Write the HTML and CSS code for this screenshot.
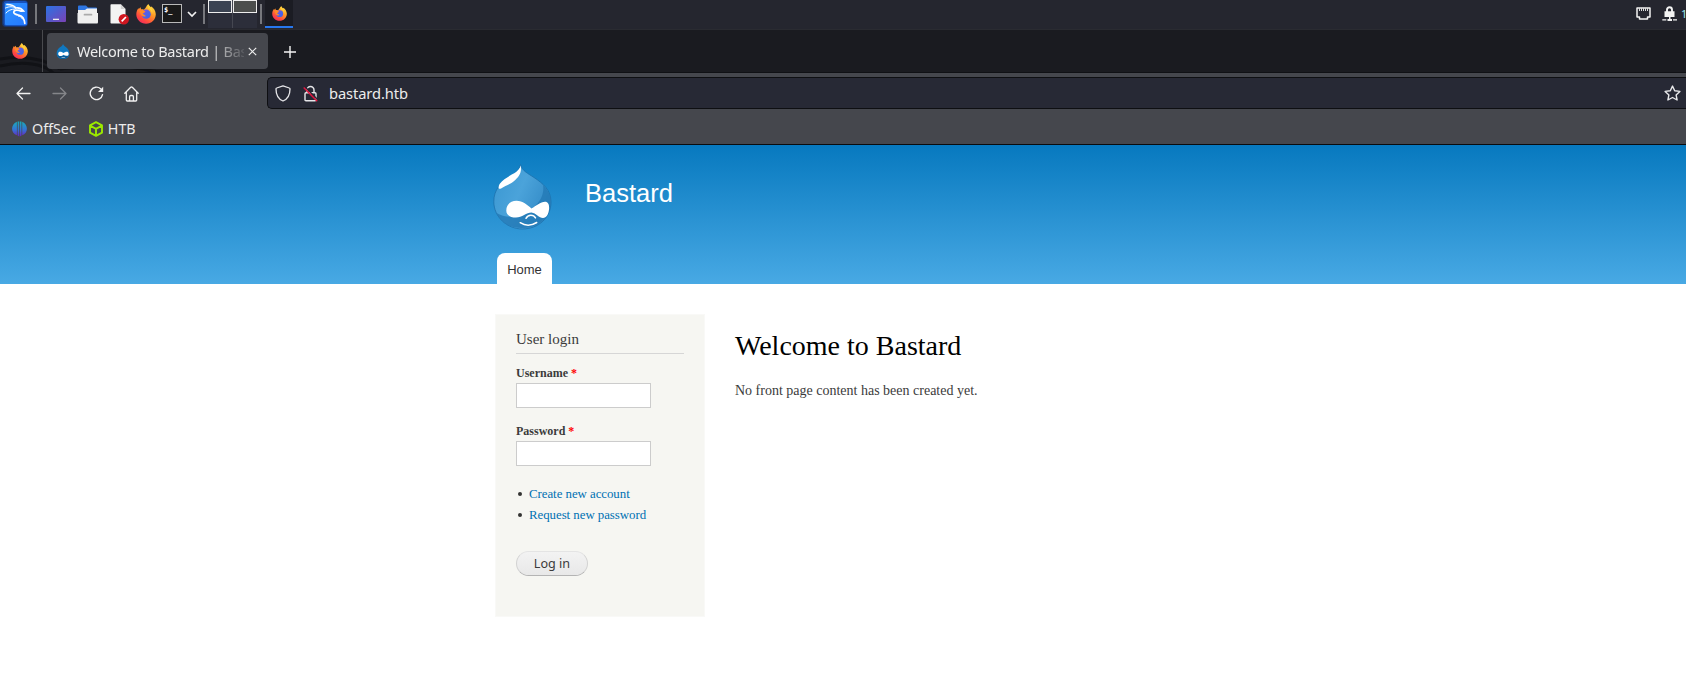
FILE: index.html
```html
<!DOCTYPE html>
<html lang="en">
<head>
<meta charset="utf-8">
<title>Welcome to Bastard | Bastard</title>
<link rel="stylesheet" href="styles.css">
</head>
<body>
<svg class="defs" width="0" height="0" aria-hidden="true">
  <defs>
    <linearGradient id="flame" x1=".85" y1="0" x2=".2" y2="1"><stop offset="0" stop-color="#ffe84a"/><stop offset=".4" stop-color="#ff9a25"/><stop offset=".75" stop-color="#ff4b3e"/><stop offset="1" stop-color="#ef2661"/></linearGradient>
    <linearGradient id="globe" x1="0" y1="0" x2="1" y2="1"><stop offset="0" stop-color="#8b45e8"/><stop offset=".5" stop-color="#4f62e6"/><stop offset="1" stop-color="#3d62e8"/></linearGradient>
    <linearGradient id="screen" x1="0" y1="0" x2="1" y2="1"><stop offset="0" stop-color="#2b73e4"/><stop offset="1" stop-color="#7a42b5"/></linearGradient>
    <linearGradient id="kali" x1="0" y1="0" x2="1" y2="1"><stop offset="0" stop-color="#2e93ff"/><stop offset="1" stop-color="#2478ff"/></linearGradient>
    <linearGradient id="offsec" gradientUnits="userSpaceOnUse" x1="0" y1="0" x2="0" y2="16"><stop offset="0" stop-color="#16b0b6"/><stop offset=".55" stop-color="#3572d6"/><stop offset="1" stop-color="#6c1fc0"/></linearGradient>
    <linearGradient id="drop" x1="0" y1=".2" x2="1" y2=".7"><stop offset="0" stop-color="#3b98d2"/><stop offset=".45" stop-color="#4ba3da"/><stop offset="1" stop-color="#2f87c4"/></linearGradient>
    <symbol id="firefox" viewBox="0 0 20 20">
      <path fill="url(#flame)" d="M12.5 0c.2 1.4 1 2.3 2.2 3.3l.2-1c2.9 1.700 4.700 4.600 4.900 8-.1 5.400-4.300 9.500-9.700 9.500S.3 15.600.3 10.300c0-2.700 1-4.900 2.200-6.400l.2 1.300c.6-.9 1.300-1.500 2.100-1.900-.1.700 0 1.400.3 2 1-.1 2-.1 2.800.4 1-.9 1.400-1.600 2-2.500.6-1 1.300-2.300 2.600-3.200z"/>
      <circle cx="10.200" cy="10.200" r="4.600" fill="url(#globe)"/>
      <path fill="#ff8a27" d="M3.500 7.200c2.200-1.300 4.300-1.200 5.900.2-.6 1.400-1.900 1.400-2.800 2.500 1 .3 2.200 1.200 3.400 2.100-2 1.300-4.600.4-5.400-1.900z"/>
      <path fill="#ffd23c" d="M12 4.600c1.800.5 4.100 2.500 4 5.600 1.200-2.300.3-5.300-1.400-6.600L12.500.500c-.8 1.700-.8 3-.5 4.100z"/>
    </symbol>
  </defs>
</svg>

<header class="panel">
  <svg class="kali" width="28" height="28" viewBox="0 0 28 28"><rect x="2" y="0" width="26" height="27" rx="4" fill="#0d49b8" opacity=".45"/><rect x="3.500" y="1" width="24" height="25" rx="3" fill="#1760e0" opacity=".7"/><rect x="5" y="3" width="22" height="22" rx="1" fill="url(#kali)"/><g fill="none" stroke="#fff" stroke-linecap="round"><path stroke-width="1.700" d="M7 4.500c4 0 7 1 9 3.500 3-.5 5.500.6 7.500 3l-2.400.2C17.500 9.400 14 9.800 13.700 12c-.2 2.200 2.700 2.700 5.600 3.300 3.400.8 5 3.400 5.500 8"/><path stroke-width="1" d="M5.500 8c4-1.800 7.300-1.700 10 .1M6 13c2.200-2.700 5-3.800 9-4M22.500 19c-1-2-2.500-2.500-4-2.800"/></g></svg>
  <i class="divider"></i>
  <svg class="desk" width="20" height="16" viewBox="0 0 20 16"><rect width="20" height="16" rx="1" fill="url(#screen)"/><path fill="#eee" d="M7 12.700h6v1.300H7z"/></svg>
  <svg class="folder" width="22" height="19" viewBox="0 0 22 19"><path fill="#2d75e2" d="M1 1.500Q1 .5 2 .5h7l2 2h8q1 0 1 1V9H1z"/><path fill="#efefef" d="M1 5h7l2-1.500h10V8h1v9q0 1.500-1 1.500H1.500q-1 0-1-1.500V8H1z"/><path stroke="#aaa" stroke-width="1.700" stroke-linecap="round" d="M7.500 9.700h7"/></svg>
  <svg class="editor" width="20" height="21" viewBox="0 0 20 21"><path fill="#f3f3f3" d="M.5 1q0-.8.8-.8h9.500l4.700 4.700v14.600H1.300q-.8 0-.8-.8z"/><path fill="#cfcfcf" d="M10.800.2v4.700h4.700z"/><circle cx="13.800" cy="15.200" r="5.200" fill="#cf1620"/><path stroke="#fff" stroke-width="1.700" d="m11.700 17.400 4.200-4.400"/></svg>
  <svg class="ff" width="20" height="20"><use href="#firefox"/></svg>
  <span class="term"><b>$</b><b>_</b></span>
  <svg class="chev" width="10" height="7" viewBox="0 0 10 7"><path fill="none" stroke="#f1f1f1" stroke-width="1.700" d="m1 1 4 4 4-4"/></svg>
  <i class="divider second"></i>
  <span class="pager"><i class="win a"></i><i class="win b"></i></span>
  <i class="divider third"></i>
  <span class="task"><svg width="15" height="15"><use href="#firefox"/></svg></span>
  <span class="tray">
    <svg width="15" height="14" viewBox="0 0 15 14"><path fill="none" stroke="#f3f3f3" stroke-width="1.500" stroke-linejoin="round" d="M1 1h13v9h-2.500v2h-8v-2H1z"/><path stroke="#ddd" d="M3.500 1v3M5.500 1v3M7.500 1v3M9.500 1v3M11.500 1v3"/></svg>
    <svg class="lock" width="15" height="16" viewBox="0 0 15 16"><path fill="none" stroke="#f3f3f3" stroke-width="1.900" d="M5 6V3.700a2.500 2.500 0 0 1 5 0V6"/><path fill="#f3f3f3" d="M2.500 5.300h10V11h-4v2H10v2H5.500v-2H7v-2H2.500zM.3 13.200h4v1.300h-4zM11 13.200h4v1.300h-4z"/></svg>
    <span class="clock">1</span>
  </span>
</header>

<nav class="tabs">
  <svg class="wall" width="160" height="16" viewBox="0 0 160 16"><path fill="none" stroke="#111216" stroke-width="3" d="M0 3c20-3 42-2 60 10M0 10c22-5 45-3 54 8M60 13c40-5 65-3 100 3"/></svg>
  <span class="pin"><svg width="16" height="16"><use href="#firefox"/></svg></span>
  <div class="tab">
    <svg width="14" height="15" viewBox="0 0 14 15"><path fill="#1078c0" d="M7 0c1 2.200 2.300 2.500 4 4 4 4 3 11-4 11S-1 8 3 4C5 2.500 6.300 2 7 0z"/><path fill="#0b5b96" d="M1 11q6 2 12 0-2 4-6 4t-6-4z"/><path fill="#fff" d="M2.200 9.700c0-2.600 3-2.600 5.200-.6 2-1.600 5.200-2.300 5.200.8 0 3-3.400 1.800-5 .8-2 1.800-5.400 2-5.400-1zM5 13q2.500 1 4.500 0z"/></svg>
    <span class="tabname">Welcome to Bastard | Bas</span>
    <svg class="close" width="9" height="9" viewBox="0 0 9 9"><path stroke="#eee" stroke-width="1.200" d="m.8.8 7.400 7.400m0-7.400L.8 8.200"/></svg>
  </div>
  <svg class="plus" width="12" height="12" viewBox="0 0 12 12"><path stroke="#f5f5f5" stroke-width="1.400" d="M6 0v12M0 6h12"/></svg>
</nav>

<section class="toolbar">
  <svg class="back" width="15" height="13" viewBox="0 0 15 13"><path fill="none" stroke="#f1f1f1" stroke-width="1.300" stroke-linecap="round" stroke-linejoin="round" d="M14 6.500H1M6.500 1 1 6.500 6.500 12"/></svg>
  <svg class="fwd" width="15" height="13" viewBox="0 0 15 13"><path fill="none" stroke="#85868a" stroke-width="1.300" stroke-linecap="round" stroke-linejoin="round" d="M1 6.500h13M8.500 1 14 6.500 8.500 12"/></svg>
  <svg class="reload" width="15" height="15" viewBox="0 0 15 15"><path fill="none" stroke="#f1f1f1" stroke-width="1.400" stroke-linecap="round" d="M11.600 2.800A6.200 6.200 0 1 0 13.500 8.600"/><path fill="#f1f1f1" d="M14.200.8v5.200H9z"/></svg>
  <svg class="home" width="15" height="16" viewBox="0 0 15 16"><path fill="none" stroke="#f1f1f1" stroke-width="1.300" stroke-linejoin="round" stroke-linecap="round" d="M.8 7.200 6.700 1.300q.8-.7 1.600 0l5.900 5.900M2.300 6.200V14q0 1 1 1h8.400q1 0 1-1V6.200M5.600 15v-4.300q0-1.200 1.200-1.200h1.400q1.200 0 1.200 1.200V15"/></svg>
  <div class="url">
    <svg width="16" height="17" viewBox="0 0 16 17"><path fill="none" stroke="#e6e6e9" stroke-width="1.300" stroke-linejoin="round" d="M8 .9 14.300 3q.7.200.7 1c0 6-2 10-7 12-5-2-7-6-7-12q0-.8.700-1z"/></svg>
    <svg class="unsafe" width="15" height="17" viewBox="0 0 15 17"><path fill="none" stroke="#e6e6e9" stroke-width="1.400" d="M4 7.500V5a3.500 3.500 0 0 1 7 0v2.500M3 7.700h9q1 0 1 1v6q0 1-1 1H3q-1 0-1-1v-6q0-1 1-1z"/><path stroke="#272935" stroke-width="1.400" d="m2 1.800 13 13.200"/><path stroke="#e0153f" stroke-width="1.500" d="m.7 2.500 13.500 13.700"/></svg>
    <span class="address">bastard.htb</span>
    <svg class="star" width="17" height="17" viewBox="0 0 17 17"><path fill="none" stroke="#e8e8ea" stroke-width="1.400" stroke-linejoin="round" d="m8.500 1.100 2.200 4.700 5.200.6-3.800 3.500 1 5.100-4.600-2.500L3.900 15l1-5.100L1.100 6.400l5.200-.6z"/></svg>
  </div>
</section>
<section class="bookmarks">
  <svg width="15" height="16" viewBox="0 0 15 16"><path fill="url(#offsec)" d="M4.900.8v13.500C-1.200 12.300-1.900 4 4.900.8zM5.600.4h1.600v15.200L5.600 14.500zM7.900.4h1.600v14.100l-1.600 1.100zM10.200.8c6.600 3.200 5.900 11.500 0 13.500z"/></svg>
  <span class="offsec">OffSec</span>
  <svg width="16" height="16" viewBox="0 0 16 16"><path fill="none" stroke="#9be900" stroke-width="1.900" stroke-linejoin="round" d="m8 1.100 6 3.200v7.400l-6 3.200-6-3.200V4.300zM2 4.500l6 3.400 6-3.400M8 7.900v7"/></svg>
  <span class="htb">HTB</span>
</section>

<main class="site">
  <div class="banner">
    <div class="brand">
      <svg width="59" height="66" viewBox="0 0 59 66">
        <path fill="url(#drop)" stroke="#1b6da7" stroke-width=".7" d="M27.500.5c1.500 6.500 7.500 9 13.500 13 9 6 17 12.500 17 24.500 0 16-13 27-28.500 27S.8 53 .8 37.500C.8 26 8 18 16.500 13 22.500 9.500 26 7 27.500.5z"/>
        <path fill="#2379b5" opacity=".8" d="M50 21c7 7 8 13 7.500 20-1 10-8 17-14 20-9 4-20 4-29 0-5-3-9-7-11-12 10 6 24 5 35-4 9-7 13-15 11.500-24z"/>
        <path fill="#fff" d="M27.600 1.500c1.500 7-1.500 11-6.500 15.500-4.500 3.700-9 4.500-13 7.500-3 1.500-3-2-1.500-4.500C13 11 26 10 27.600 1.500z"/>
        <path fill="#fff" d="M13.300 46.500c0-6 4.500-9.700 10.200-9.700 6.500 0 10.500 4.200 15 7.700 4.500-2.500 9-6.700 13.500-6.700 3.500 0 4.500 3.700 4 7.700-.5 4.500-2.500 8.500-6 8.500-4 0-7-5-11.500-5.500-5 0-9.500 5-15.500 5-6 0-9.700-2.500-9.700-7z"/>
        <path fill="none" stroke="#fff" stroke-width="1.500" stroke-linecap="round" d="M33 54.300c2-4 7.500-4 9.500-.4M27.200 58.700q8 5 16.500-.2"/>
      </svg>
      <span class="sitename">Bastard</span>
    </div>
    <a class="hometab">Home</a>
  </div>
  <div class="columns">
    <aside class="login">
      <h2>User login</h2>
      <label>Username <b>*</b></label>
      <div class="field"></div>
      <label>Password <b>*</b></label>
      <div class="field"></div>
      <ul><li><a>Create new account</a></li><li><a>Request new password</a></li></ul>
      <span class="submit">Log in</span>
    </aside>
    <article>
      <h1>Welcome to Bastard</h1>
      <p>No front page content has been created yet.</p>
    </article>
  </div>
</main>
</body>
</html>
```
FILE: styles.css
```css
* { box-sizing: border-box; }
html, body { margin: 0; height: 677px; overflow: hidden; background: #fff; }
body { font-family: "Noto Sans", sans-serif; }
svg { display: block; flex: none; }
.defs { position: absolute; }

.panel { height: 29px; background: #25262f; display: flex; align-items: flex-start; overflow: hidden; }
.divider { width: 2px; height: 20px; background: #77787d; margin: 4px 0 0 7px; flex: none; }
.desk { margin: 6px 0 0 9px; }
.folder { margin: 5px 0 0 11px; }
.editor { margin: 4px 0 0 11px; }
.ff { margin: 4px 0 0 6px; }
.term { width: 20px; height: 19px; margin: 4px 0 0 6px; border: 1px solid #b9b9b9; background: #191919; color: #fff; font: bold 7px/9px "DejaVu Sans Mono", monospace; padding: 1px; flex: none; }
.term b:last-child { position: relative; top: 1px; }
.chev { margin: 11px 0 0 5px; }
.divider.second { margin-left: 6px; }
.pager { margin-left: 3px; width: 49px; height: 28px; display: grid; grid-template-columns: 24px 24px; gap: 1px; background: linear-gradient(90deg, #2c2e3a 24px, #454751 24px 25px, #2c2e3a 25px); flex: none; }
.win { height: 13px; border: 1px solid #eee; }
.a { background: #3b4352; }
.b { background: #4c4e4d; }
.divider.third { margin-left: 3px; }
.task { width: 28px; height: 28px; margin-left: 3px; background: #1b1c23; border-bottom: 2px solid #2777ee; padding: 6px 0 0 7px; flex: none; }
.tray { display: flex; flex: none; margin-left: auto; padding-top: 6px; }
.tray svg { margin-top: 1px; }
.tray .lock { margin: 0 0 0 11px; }
.clock { width: 5px; overflow: hidden; margin-left: 4px; font-size: 11px; line-height: 15px; color: #9fe7ee; }

.tabs { height: 44px; background: #1a1b20; border-top: 1px solid #2a2b31; border-bottom: 1px solid #101115; display: flex; position: relative; }
.wall { position: absolute; left: 0; bottom: 0; }
.pin { width: 43px; border-right: 1px solid #494a4e; padding: 13px 0 0 12px; position: relative; }
.tab { position: relative; width: 221px; height: 36px; margin: 3px 0 0 4px; background: #45474d; border-radius: 4px; display: flex; align-items: center; padding-left: 9px; color: #ececec; font-size: 14.500px; }
.tabname { width: 167px; margin-left: 7px; white-space: nowrap; line-height: 24px; letter-spacing: -.27px; -webkit-mask-image: linear-gradient(90deg, #000 130px, transparent 172px); mask-image: linear-gradient(90deg, #000 130px, transparent 172px); }
.close { margin-left: 4px; }
.plus { margin: 16px 0 0 16px; }

.toolbar { height: 39px; background: #45474d; display: flex; align-items: center; padding: 2px 0 0 17px; }
.back { margin-left: -1px; }
.fwd { margin-left: 21px; }
.reload { margin-left: 22px; }
.home { margin-left: 20px; }
.url { flex: 1; height: 32px; margin: 0 0 1px 128px; border: 1px solid #0e0f12; border-right: 0; border-radius: 5px 0 0 5px; background: #272935; display: flex; align-items: center; padding-left: 7px; color: #ececec; font-size: 14.700px; letter-spacing: -.1px; }
.unsafe { margin-left: 12px; }
.address { margin-left: 11px; line-height: 22px; }
.star { margin: 0 5px 0 auto; }
.bookmarks { height: 33px; background: #45474d; border-bottom: 1px solid #0b0c0e; display: flex; align-items: center; color: #ececec; font-size: 14.300px; padding: 1px 0 0 12px; }
.offsec { margin: 0 12px 0 5px; }
.htb { margin-left: 4px; }

.banner { height: 139px; background: linear-gradient(#0779bf, #48a9e4); padding: 19px 0 0 493px; display: flex; flex-direction: column; align-items: flex-start; }
.brand { display: flex; height: 89px; }
.sitename { color: #fff; font: 25.500px/36px "Liberation Sans", Arial, sans-serif; margin: 11px 0 0 33px; }
.hometab { margin-left: 4px; width: 55px; height: 31px; border-radius: 8px 8px 0 0; background: #fff; color: #333; font: 13px/34px "Liberation Sans", Arial, sans-serif; text-align: center; }
.columns { display: flex; padding: 30px 0 0 495px; font-family: "Liberation Serif", "Times New Roman", serif; }
.login { width: 210px; height: 303px; border: 1px solid #f9f9f7; background: #f6f6f2; padding: 14px 20px 0; color: #3b3b3b; }
h2 { margin: 0 0 11px; height: 25px; border-bottom: 1px solid #d6d6d6; font-weight: normal; font-size: 15px; line-height: 20px; }
label { display: block; font-size: 12px; font-weight: bold; line-height: 17px; height: 18px; }
label b { color: #f00; }
.field { width: 135px; height: 25px; border: 1px solid #ccc; background: #fff; margin-bottom: 15px; }
ul { list-style: none; margin: 17px 0 0; padding: 0; }
li { height: 21px; line-height: 20px; font-size: 12.860px; display: flex; align-items: center; color: #0071b3; }
li::before { content: ""; width: 4px; height: 4px; border-radius: 50%; background: #333; margin: 1px 7px 0 2px; }
li a { letter-spacing: -.04px; }
.submit { display: block; width: 72px; height: 25px; margin-top: 26px; border: 1px solid #e4e4e4; border-bottom-color: #b4b4b4; border-left-color: #d2d2d2; border-right-color: #d2d2d2; border-radius: 13px; background: linear-gradient(#f3f3f3, #e8e8e8); text-align: center; font: 12.600px/23px "Noto Sans", sans-serif; color: #3a3a3a; }
article { margin-left: 30px; }
h1 { margin: 14px 0 0; font-size: 28px; font-weight: normal; line-height: 36px; color: #000; }
p { margin: 17px 0 0; font-size: 14px; line-height: 20px; color: #3b3b3b; }
```
